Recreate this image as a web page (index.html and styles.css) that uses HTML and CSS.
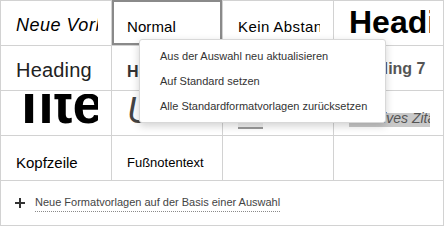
FILE: index.html
```html
<!DOCTYPE html>
<html lang="de">
<head>
<meta charset="utf-8">
<title>Formatvorlagen</title>
<link rel="stylesheet" href="styles.css">
</head>
<body>
<div class="panel">
  <div class="gallery">
    <div class="cell"><div class="clip"><span class="pv s-new">Neue Vorlage</span></div></div>
    <div class="cell sel"><div class="clip"><span class="pv s-normal">Normal</span></div></div>
    <div class="cell"><div class="clip"><span class="pv s-kein">Kein Abstand</span></div></div>
    <div class="cell"><div class="clip"><span class="pv s-h0">Heading</span></div></div>

    <div class="cell"><div class="clip"><span class="pv s-h1">Heading 1</span></div></div>
    <div class="cell"><div class="clip"><span class="pv s-h2">Heading 2</span></div></div>
    <div class="cell"><div class="clip"><span class="pv s-h2">Heading 3</span></div></div>
    <div class="cell"><div class="clip"><span class="pv s-h7">Heading 7</span></div></div>

    <div class="cell"><div class="clip"><span class="pv s-title"><span class="t">T</span>itel</span></div></div>
    <div class="cell"><div class="clip"><span class="pv s-sub">Untertitel</span></div></div>
    <div class="cell"><div class="clip"><span class="pv s-quote"></span></div></div>
    <div class="cell"><div class="clip"><span class="pv s-iquote">Intensives Zitat</span></div></div>

    <div class="cell"><div class="clip"><span class="pv s-head">Kopfzeile</span></div></div>
    <div class="cell"><div class="clip"><span class="pv s-foot">Fußnotentext</span></div></div>
    <div class="cell"></div>
    <div class="cell"></div>
  </div>
  <div class="footer">
    <svg class="plus" width="10" height="10" viewBox="0 0 10 10"><path d="M0 5H10M5 0V10" stroke="#333" stroke-width="2"/></svg>
    <span class="newlink">Neue Formatvorlagen auf der Basis einer Auswahl</span>
  </div>
  <div class="menu">
    <div class="item">Aus der Auswahl neu aktualisieren</div>
    <div class="item">Auf Standard setzen</div>
    <div class="item">Alle Standardformatvorlagen zurücksetzen</div>
  </div>
</div>
</body>
</html>
```
FILE: styles.css
```css
html, body {
  margin: 0;
  padding: 0;
  background: #fff;
}
body {
  font-family: "Liberation Sans", Arial, sans-serif;
  color: #000;
}
.panel {
  position: relative;
  width: 444px;
  height: 226px;
  box-sizing: border-box;
  border: 1px solid #d2d2d2;
  background: #fff;
}
.gallery {
  display: grid;
  grid-template-columns: 110px 110px 110px 109px;
  grid-auto-rows: 44px;
  gap: 1px;
  background: #d2d2d2;
  border-bottom: 1px solid #d2d2d2;
}
.cell {
  position: relative;
  background: #fff;
  box-sizing: border-box;
  padding: 3px 13px 0 15px;
}
.cell.sel::after {
  content: "";
  position: absolute;
  left: 0;
  right: 0;
  top: -1px;
  bottom: 0;
  border: 2px solid #8a8a8a;
}
.clip {
  height: 39px;
  overflow: hidden;
  white-space: nowrap;
}
.pv {
  display: block;
  line-height: 1;
}
.s-new { font-size: 18px; font-style: italic; letter-spacing: 0.5px; padding-top: 11.5px; }
.s-normal { font-size: 15px; letter-spacing: 0.1px; padding-top: 14.5px; }
.s-kein { font-size: 15px; letter-spacing: 0.4px; padding-top: 14.5px; }
.s-h0 { font-size: 32px; font-weight: bold; padding-top: 2px; }
.s-h1 { font-size: 20px; color: #222; letter-spacing: 0.2px; padding-top: 11.4px; }
.s-h2 { font-size: 16px; font-weight: bold; color: #333; padding-top: 14.7px; }
.s-h7 { font-size: 16px; font-weight: bold; color: #555; padding-top: 11.7px; }
.s-title { font-size: 56px; font-weight: bold; margin-top: -17.9px; margin-left: -4px; }
.s-title .t { margin-right: -8px; }
.s-sub { font-size: 36px; font-style: italic; color: #444; margin-top: -1px; }
.s-quote {
  width: 28px;
  height: 20px;
  margin: 13px 0 0 -5px;
  border-left: 2px solid #999;
  border-bottom: 2px solid #999;
  background: #f1f1f1;
}
.s-iquote {
  display: inline-block;
  font-size: 14px;
  line-height: 11px;
  font-style: italic;
  color: #555;
  background: #c9c9c9;
  border-left: 1px solid #9a9a9a;
  margin: 19px 0 0 -3px;
  padding-bottom: 3px;
  text-indent: -2px;
}
.s-head { font-size: 15px; padding-top: 15.5px; }
.s-foot { font-size: 13px; padding-top: 17.2px; }
.footer {
  display: flex;
  align-items: flex-start;
  padding: 15px 0 0 14px;
}
.plus {
  margin: 2px 10px 0 0;
  flex: none;
}
.newlink {
  font-size: 11px;
  line-height: 13px;
  color: #444;
  padding-bottom: 2px;
  border-bottom: 1px dotted #8a8a8a;
}
.menu {
  position: absolute;
  left: 138px;
  top: 38px;
  width: 247px;
  height: 84px;
  box-sizing: border-box;
  padding: 4px 0;
  background: #fff;
  border: 1px solid #d8d8d8;
  border-radius: 3px;
  box-shadow: 0 3px 8px rgba(0, 0, 0, 0.18);
}
.item {
  font-size: 11px;
  line-height: 25px;
  color: #333;
  padding-left: 20px;
  white-space: nowrap;
}
```
